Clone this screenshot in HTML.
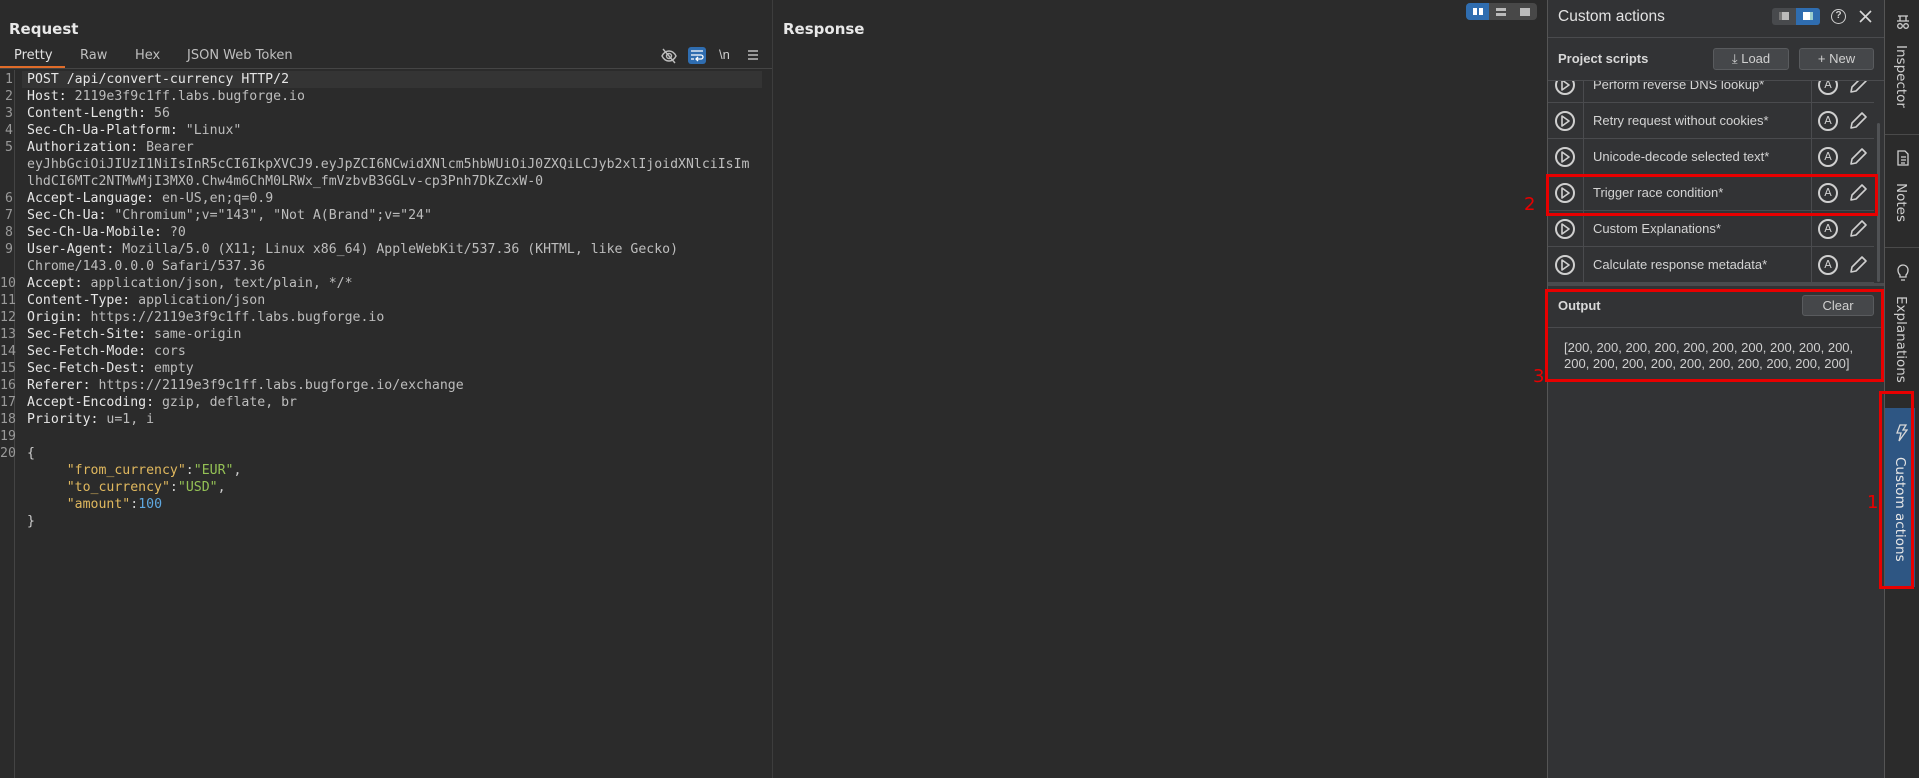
<!DOCTYPE html>
<html><head><meta charset="utf-8"><style>
*{margin:0;padding:0;box-sizing:border-box}
body{width:1919px;height:778px;background:#2b2b2b;font-family:"Liberation Sans","DejaVu Sans",sans-serif;color:#d6d6d6;position:relative;overflow:hidden}
.abs{position:absolute}
.mono{font-family:"DejaVu Sans Mono","Liberation Mono",monospace;font-size:13.2px}
.ln{position:absolute;left:0;width:13px;text-align:right;color:#9a9a9a}
.cl{position:absolute;left:27px;white-space:pre;color:#d0d0d0}
.k{color:#e6e6e6}.v{color:#bdbdbd}
.jk{color:#e0b85e}.js{color:#94c155}.jn{color:#5fa8e0}.jp{color:#cfcfcf}
.row{position:absolute;left:1548px;width:326px;height:36px;border-bottom:1px solid #4a4b4e}
.row .play{position:absolute;left:7px;top:8px;width:20px;height:20px;border:2px solid #cfcfcf;border-radius:50%}
.row .c1{position:absolute;left:35px;top:0;bottom:0;border-left:1px solid #4a4b4e}
.row .c2{position:absolute;left:263px;top:0;bottom:0;border-left:1px solid #4a4b4e}
.row .t{position:absolute;left:45px;top:10px;color:#d4d4d4;font-family:"Liberation Sans",sans-serif;font-size:13px}
.row .a{position:absolute;left:270px;top:8px;width:20px;height:20px;border:2px solid #cfcfcf;border-radius:50%;font-size:11px;line-height:16px;text-align:center;color:#cfcfcf;font-family:"DejaVu Sans",sans-serif}
.btn{position:absolute;background:#45474a;border:1px solid #595b5e;border-radius:3px;color:#d0d0d0;font-family:"Liberation Sans",sans-serif;font-size:13px;text-align:center}
.vt{position:absolute;writing-mode:vertical-rl;font-family:"DejaVu Sans",sans-serif;font-size:13.5px;color:#cfcfcf}
.red{position:absolute;border:3px solid #e80000}
.rn{position:absolute;color:#e80000;font-size:18px;font-family:"DejaVu Sans",sans-serif}
</style></head><body>

<!-- Request panel -->
<div class="abs" style="left:9px;top:20px;font-size:15px;font-weight:bold;color:#e8e8e8;font-family:'DejaVu Sans',sans-serif">Request</div>
<div class="abs" style="left:14px;top:48px;font-size:13px;color:#e0e0e0;font-family:'DejaVu Sans',sans-serif">Pretty</div>
<div class="abs" style="left:80px;top:48px;font-size:13px;color:#bfbfbf;font-family:'DejaVu Sans',sans-serif">Raw</div>
<div class="abs" style="left:135px;top:48px;font-size:13px;color:#bfbfbf;font-family:'DejaVu Sans',sans-serif">Hex</div>
<div class="abs" style="left:187px;top:48px;font-size:13px;color:#bfbfbf;font-family:'DejaVu Sans',sans-serif">JSON Web Token</div>
<div class="abs" style="left:0;top:66px;width:65px;height:3px;background:#e06c2a"></div>
<div class="abs" style="left:0;top:68px;width:772px;height:1px;background:#454545"></div>
<svg class="abs" style="left:660px;top:47px" width="18" height="18" viewBox="0 0 18 18" fill="none" stroke="#bdbdbd" stroke-width="1.4"><path d="M2 9c2-4 5-5 7-5s5 1 7 5c-2 4-5 5-7 5S4 13 2 9z"/><circle cx="9" cy="9" r="2.5"/><path d="M3 2l12 14"/></svg>
<div class="abs" style="left:688px;top:47px;width:18px;height:17px;background:#2f6db0;border-radius:3px"></div>
<svg class="abs" style="left:690px;top:49px" width="14" height="13" viewBox="0 0 14 13" fill="none" stroke="#fff" stroke-width="1.3"><path d="M1 2h12M1 6h10a2 2 0 010 4H7M8 8l-2 2 2 2M1 10h3"/></svg>
<div class="abs" style="left:719px;top:47px;font-size:13px;color:#cfcfcf">\n</div>
<svg class="abs" style="left:747px;top:49px" width="12" height="12" viewBox="0 0 12 12" stroke="#bdbdbd" stroke-width="1.4"><path d="M1 2h10M1 6h10M1 10h10"/></svg>

<div class="abs" style="left:14px;top:70px;width:1px;height:708px;background:#444"></div>
<div class="abs" style="left:22px;top:71px;width:740px;height:17px;background:#343434"></div>
<div class="mono" style="position:absolute;left:0;top:71px;width:772px;height:700px;line-height:17px">
<div class="ln" style="top:0">1</div><div class="cl" style="top:0"><span class="k">POST /api/convert-currency HTTP/2</span></div>
<div class="ln" style="top:17px">2</div><div class="cl" style="top:17px"><span class="k">Host: </span><span class="v">2119e3f9c1ff.labs.bugforge.io</span></div>
<div class="ln" style="top:34px">3</div><div class="cl" style="top:34px"><span class="k">Content-Length: </span><span class="v">56</span></div>
<div class="ln" style="top:51px">4</div><div class="cl" style="top:51px"><span class="k">Sec-Ch-Ua-Platform: </span><span class="v">"Linux"</span></div>
<div class="ln" style="top:68px">5</div><div class="cl" style="top:68px"><span class="k">Authorization: </span><span class="v">Bearer</span></div>
<div class="cl" style="top:85px"><span class="v">eyJhbGciOiJIUzI1NiIsInR5cCI6IkpXVCJ9.eyJpZCI6NCwidXNlcm5hbWUiOiJ0ZXQiLCJyb2xlIjoidXNlciIsIm</span></div>
<div class="cl" style="top:102px"><span class="v">lhdCI6MTc2NTMwMjI3MX0.Chw4m6ChM0LRWx_fmVzbvB3GGLv-cp3Pnh7DkZcxW-0</span></div>
<div class="ln" style="top:119px">6</div><div class="cl" style="top:119px"><span class="k">Accept-Language: </span><span class="v">en-US,en;q=0.9</span></div>
<div class="ln" style="top:136px">7</div><div class="cl" style="top:136px"><span class="k">Sec-Ch-Ua: </span><span class="v">"Chromium";v="143", "Not A(Brand";v="24"</span></div>
<div class="ln" style="top:153px">8</div><div class="cl" style="top:153px"><span class="k">Sec-Ch-Ua-Mobile: </span><span class="v">?0</span></div>
<div class="ln" style="top:170px">9</div><div class="cl" style="top:170px"><span class="k">User-Agent: </span><span class="v">Mozilla/5.0 (X11; Linux x86_64) AppleWebKit/537.36 (KHTML, like Gecko)</span></div>
<div class="cl" style="top:187px"><span class="v">Chrome/143.0.0.0 Safari/537.36</span></div>
<div class="ln" style="top:204px">10</div><div class="cl" style="top:204px"><span class="k">Accept: </span><span class="v">application/json, text/plain, */*</span></div>
<div class="ln" style="top:221px">11</div><div class="cl" style="top:221px"><span class="k">Content-Type: </span><span class="v">application/json</span></div>
<div class="ln" style="top:238px">12</div><div class="cl" style="top:238px"><span class="k">Origin: </span><span class="v">https://2119e3f9c1ff.labs.bugforge.io</span></div>
<div class="ln" style="top:255px">13</div><div class="cl" style="top:255px"><span class="k">Sec-Fetch-Site: </span><span class="v">same-origin</span></div>
<div class="ln" style="top:272px">14</div><div class="cl" style="top:272px"><span class="k">Sec-Fetch-Mode: </span><span class="v">cors</span></div>
<div class="ln" style="top:289px">15</div><div class="cl" style="top:289px"><span class="k">Sec-Fetch-Dest: </span><span class="v">empty</span></div>
<div class="ln" style="top:306px">16</div><div class="cl" style="top:306px"><span class="k">Referer: </span><span class="v">https://2119e3f9c1ff.labs.bugforge.io/exchange</span></div>
<div class="ln" style="top:323px">17</div><div class="cl" style="top:323px"><span class="k">Accept-Encoding: </span><span class="v">gzip, deflate, br</span></div>
<div class="ln" style="top:340px">18</div><div class="cl" style="top:340px"><span class="k">Priority: </span><span class="v">u=1, i</span></div>
<div class="ln" style="top:357px">19</div>
<div class="ln" style="top:374px">20</div><div class="cl" style="top:374px"><span class="jp">{</span></div>
<div class="cl" style="top:391px">     <span class="jk">"from_currency"</span><span class="jp">:</span><span class="js">"EUR"</span><span class="jp">,</span></div>
<div class="cl" style="top:408px">     <span class="jk">"to_currency"</span><span class="jp">:</span><span class="js">"USD"</span><span class="jp">,</span></div>
<div class="cl" style="top:425px">     <span class="jk">"amount"</span><span class="jp">:</span><span class="jn">100</span></div>
<div class="cl" style="top:442px"><span class="jp">}</span></div>
</div>

<div class="abs" style="left:772px;top:0;width:1px;height:778px;background:#3d3d3d"></div>

<!-- Response -->
<div class="abs" style="left:783px;top:20px;font-size:15px;font-weight:bold;color:#e8e8e8;font-family:'DejaVu Sans',sans-serif">Response</div>
<div class="abs" style="left:1466px;top:3px;width:71px;height:17px;background:#484848;border-radius:4px"></div>
<div class="abs" style="left:1466px;top:3px;width:23px;height:17px;background:#2f6db0;border-radius:4px 0 0 4px"></div>
<div class="abs" style="left:1473px;top:8px;width:4px;height:7px;background:#fff"></div>
<div class="abs" style="left:1479px;top:8px;width:4px;height:7px;background:#fff"></div>
<div class="abs" style="left:1496px;top:8px;width:10px;height:3px;background:#bbb"></div>
<div class="abs" style="left:1496px;top:13px;width:10px;height:3px;background:#bbb"></div>
<div class="abs" style="left:1520px;top:8px;width:10px;height:8px;background:#bbb"></div>

<!-- Custom actions panel -->
<div class="abs" style="left:1547px;top:0;width:337px;height:778px;background:#323335;border-left:1px solid #555"></div>
<div class="abs" style="left:1558px;top:8px;font-size:15.5px;color:#e2e2e2;font-family:'Liberation Sans',sans-serif">Custom actions</div>
<div class="abs" style="left:1772px;top:8px;width:48px;height:17px;background:#484a4d;border-radius:3px"></div>
<div class="abs" style="left:1796px;top:8px;width:24px;height:17px;background:#2f6db0;border-radius:0 3px 3px 0"></div>
<div class="abs" style="left:1779px;top:12px;width:10px;height:8px;background:#bbb;border-left:3px solid #777"></div>
<div class="abs" style="left:1803px;top:12px;width:10px;height:8px;background:#fff;border-right:3px solid #9cc"></div>
<div class="abs" style="left:1831px;top:9px;width:15px;height:15px;border:1.5px solid #cfcfcf;border-radius:50%;font-size:10px;line-height:12px;text-align:center;color:#cfcfcf;font-weight:bold">?</div>
<svg class="abs" style="left:1859px;top:10px" width="13" height="13" stroke="#d8d8d8" stroke-width="1.6"><path d="M1 1l11 11M12 1L1 12"/></svg>
<div class="abs" style="left:1548px;top:37px;width:336px;height:1px;background:#4a4b4e"></div>
<div class="abs" style="left:1558px;top:51px;font-size:13px;font-weight:bold;color:#d8d8d8;font-family:'Liberation Sans',sans-serif">Project scripts</div>
<div class="btn" style="left:1713px;top:48px;width:76px;height:22px;line-height:20px">&#x2913; Load</div>
<div class="btn" style="left:1799px;top:48px;width:75px;height:22px;line-height:20px">+ New</div>
<div class="abs" style="left:1548px;top:80px;width:336px;height:1px;background:#4a4b4e"></div>

<div style="position:absolute;left:0;top:81px;width:1919px;height:202px;overflow:hidden">
 <div style="position:absolute;left:0;top:-14px;width:1919px">
  <div class="row" style="top:0"><div class="play"></div><div class="c1"></div><div class="t">Perform reverse DNS lookup*</div><div class="c2"></div><div class="a">A</div></div>
  <div class="row" style="top:36px"><div class="play"></div><div class="c1"></div><div class="t">Retry request without cookies*</div><div class="c2"></div><div class="a">A</div></div>
  <div class="row" style="top:72px"><div class="play"></div><div class="c1"></div><div class="t">Unicode-decode selected text*</div><div class="c2"></div><div class="a">A</div></div>
  <div class="row" style="top:108px"><div class="play"></div><div class="c1"></div><div class="t">Trigger race condition*</div><div class="c2"></div><div class="a">A</div></div>
  <div class="row" style="top:144px"><div class="play"></div><div class="c1"></div><div class="t">Custom Explanations*</div><div class="c2"></div><div class="a">A</div></div>
  <div class="row" style="top:180px"><div class="play"></div><div class="c1"></div><div class="t">Calculate response metadata*</div><div class="c2"></div><div class="a">A</div></div>
 </div>
</div>
<svg class="abs" style="left:1548px;top:81px" width="336" height="202" fill="none" stroke="#cfcfcf" stroke-width="1.6" stroke-linejoin="round">
 <path d="M14 -1l7 5-7 5z M14 35l7 5-7 5z M14 71l7 5-7 5z M14 107l7 5-7 5z M14 143l7 5-7 5z M14 179l7 5-7 5z"/>
 <path d="M303 11l1-5 10-10 4 4-10 10z M303 47l1-5 10-10 4 4-10 10z M303 83l1-5 10-10 4 4-10 10z M303 119l1-5 10-10 4 4-10 10z M303 155l1-5 10-10 4 4-10 10z M303 191l1-5 10-10 4 4-10 10z"/>
 <rect x="329" y="42" width="3" height="159" rx="1.5" fill="#505255" stroke="none"/>
</svg>
<div class="abs" style="left:1548px;top:283px;width:336px;height:3px;background:#4a4b4e"></div>

<div class="abs" style="left:1558px;top:298px;font-size:13px;font-weight:bold;color:#d8d8d8;font-family:'Liberation Sans',sans-serif">Output</div>
<div class="btn" style="left:1802px;top:295px;width:72px;height:21px;line-height:19px">Clear</div>
<div class="abs" style="left:1548px;top:327px;width:336px;height:1px;background:#4a4b4e"></div>
<div class="abs" style="left:1564px;top:340px;font-size:13px;line-height:16px;color:#cfcfcf;font-family:'Liberation Sans',sans-serif;white-space:nowrap">[200, 200, 200, 200, 200, 200, 200, 200, 200, 200,<br>200, 200, 200, 200, 200, 200, 200, 200, 200, 200]</div>

<!-- Sidebar -->
<div class="abs" style="left:1884px;top:0;width:1px;height:778px;background:#555"></div>
<div class="abs" style="left:1885px;top:134px;width:34px;height:1px;background:#4a4a4a"></div>
<div class="abs" style="left:1885px;top:247px;width:34px;height:1px;background:#4a4a4a"></div>
<svg class="abs" style="left:1895px;top:14px" width="16" height="16" fill="none" stroke="#cfcfcf" stroke-width="1.3"><path d="M3 2h10M5 2v5h6V2M2 7h12"/><circle cx="5" cy="12" r="2.3"/><circle cx="11" cy="12" r="2.3"/></svg>
<div class="vt" style="left:1893px;top:45px">Inspector</div>
<svg class="abs" style="left:1896px;top:150px" width="14" height="16" fill="none" stroke="#cfcfcf" stroke-width="1.3"><path d="M2 1h7l3 3v11H2z M5 7h5M5 10h5M5 13h4"/></svg>
<div class="vt" style="left:1893px;top:183px">Notes</div>
<svg class="abs" style="left:1896px;top:264px" width="14" height="18" fill="none" stroke="#cfcfcf" stroke-width="1.3"><path d="M4 11c-2-2-2-4-2-5a5 5 0 0110 0c0 1 0 3-2 5v2H4z M5 16h4"/></svg>
<div class="vt" style="left:1893px;top:296px">Explanations</div>
<div class="abs" style="left:1885px;top:408px;width:30px;height:179px;background:#2e5683"></div>
<svg class="abs" style="left:1894px;top:424px" width="14" height="18" fill="none" stroke="#d8d8d8" stroke-width="1.3"><path d="M6 1h6l-3 5h4L5 17l2-8H3z"/></svg>
<div class="vt" style="left:1892px;top:457px;color:#e6e6e6">Custom actions</div>

<!-- annotations -->
<div class="red" style="left:1546px;top:174px;width:332px;height:42px"></div>
<div class="red" style="left:1545px;top:289px;width:339px;height:93px"></div>
<div class="red" style="left:1879px;top:391px;width:35px;height:198px"></div>
<div class="rn" style="left:1524px;top:194px">2</div>
<div class="rn" style="left:1533px;top:366px">3</div>
<div class="rn" style="left:1867px;top:492px">1</div>
</body></html>
